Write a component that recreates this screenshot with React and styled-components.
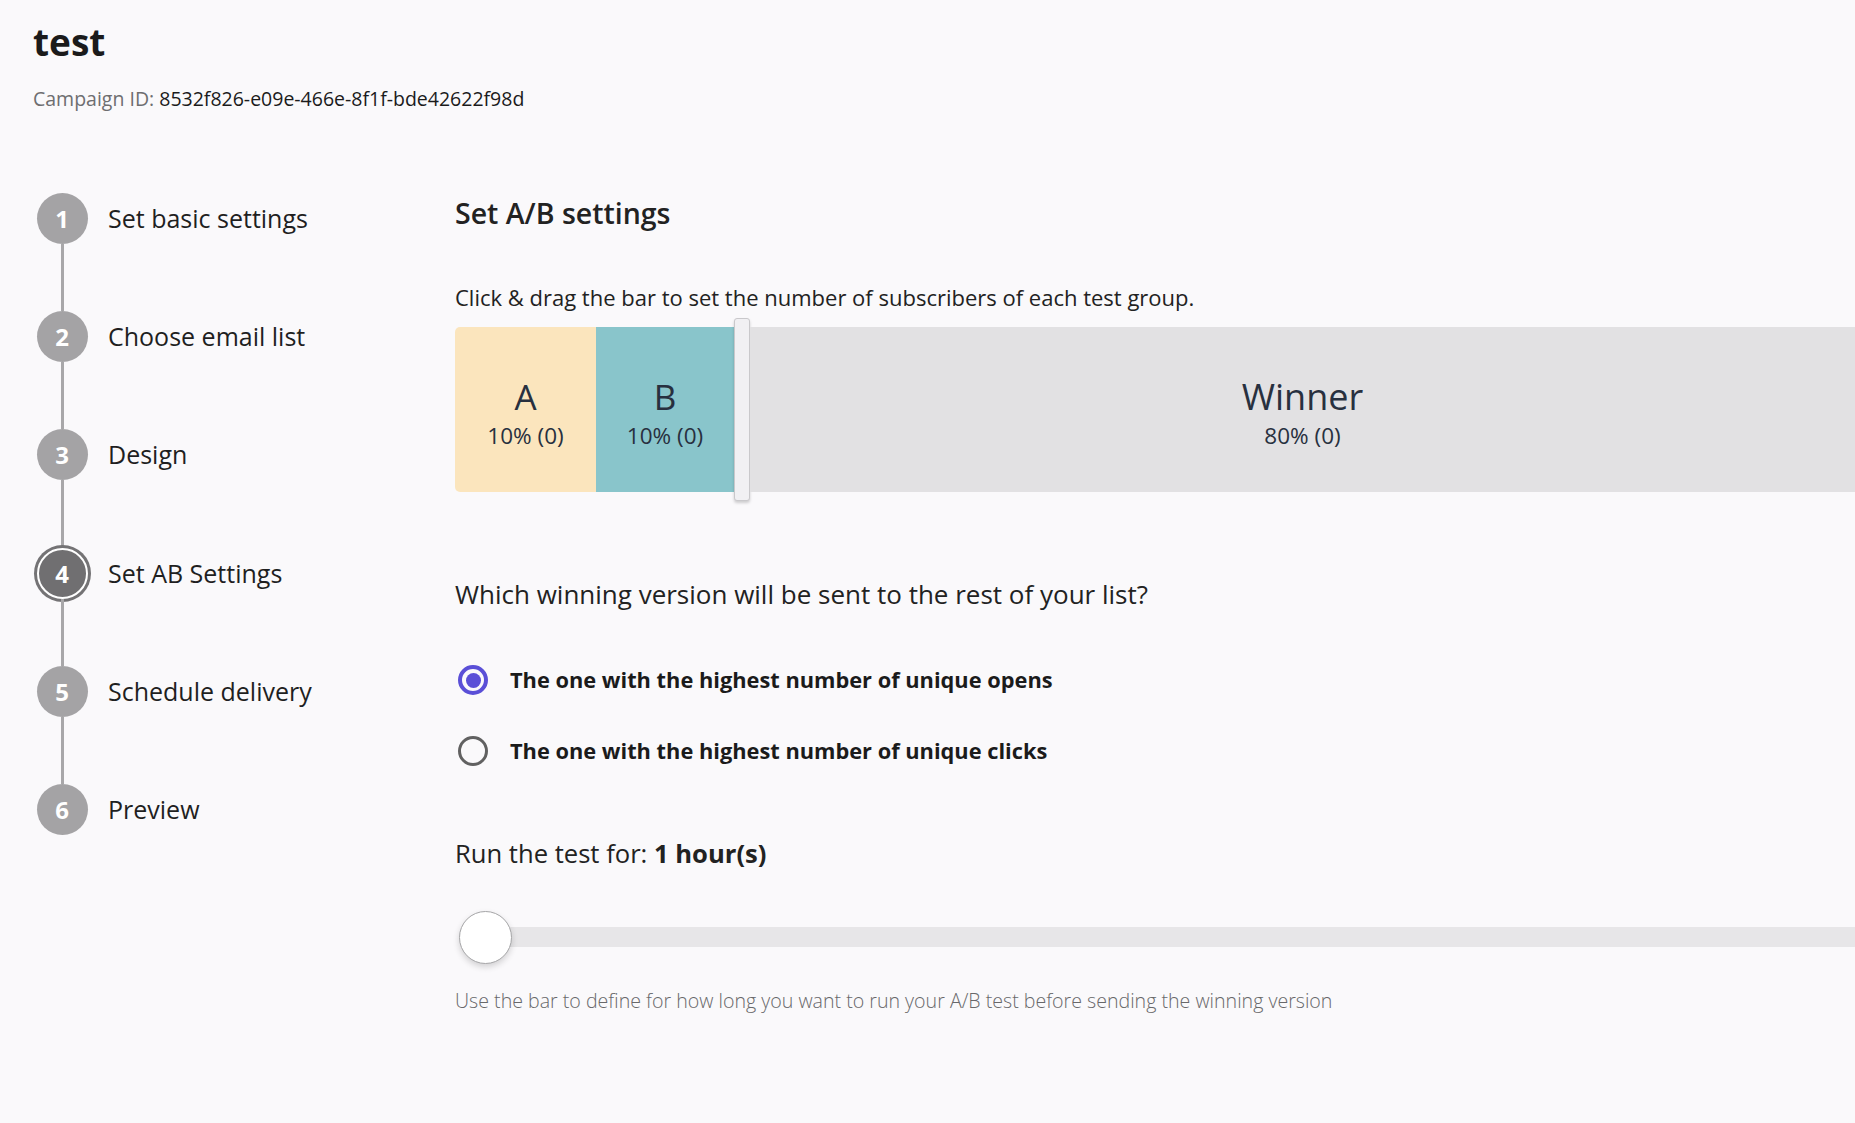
import styled, { createGlobalStyle } from "styled-components";

const GlobalStyle = createGlobalStyle`
  html, body {
    margin: 0;
    padding: 0;
    background: #faf9fb;
    font-family: "Open Sans", "Noto Sans", sans-serif;
    color: #1f1f1f;
  }
  body {
    overflow: hidden;
  }
`;

const Page = styled.div`
  width: 1855px;
  height: 1123px;
  box-sizing: border-box;
  padding: 17.5px 0 0 33px;
  overflow: hidden;
`;

const Header = styled.header`
  display: flex;
  flex-direction: column;
`;

const Title = styled.h1`
  margin: 0;
  font-size: 37px;
  line-height: 48px;
  font-weight: 700;
  color: #1b1b1b;
`;

const CampaignId = styled.div`
  margin-top: 21.5px;
  font-size: 19.5px;
  line-height: 23px;
  color: #1b1b1b;

  span {
    color: #6e6e70;
  }
`;

const Content = styled.div`
  display: flex;
  margin-top: 40px;
`;

const Sidebar = styled.nav`
  flex: 0 0 422px;
  box-sizing: border-box;
  padding: 42.5px 0 0 3.5px;
  display: flex;
  flex-direction: column;
`;

const StepRow = styled.div`
  display: flex;
  align-items: flex-start;
  gap: 20.5px;
`;

const Marker = styled.div`
  display: flex;
  flex-direction: column;
  align-items: center;
  width: 51px;
`;

const Circle = styled.div`
  width: 51px;
  height: 51px;
  box-sizing: border-box;
  border-radius: 50%;
  display: flex;
  align-items: center;
  justify-content: center;
  background: ${(p) => (p.$active ? "#706f71" : "#a4a3a5")};
  border: ${(p) => (p.$active ? "2px solid #ffffff" : "none")};
  box-shadow: ${(p) => (p.$active ? "0 0 0 3px #747375" : "none")};
  color: #ffffff;
  font-size: 24px;
  font-weight: 700;
`;

const Connector = styled.div`
  width: 3px;
  height: 67.4px;
  background: #a8a7a9;
`;

const StepLabel = styled.span`
  font-size: 25px;
  line-height: 51px;
  color: #1f1f1f;
`;

const Main = styled.main`
  flex: 1;
  min-width: 0;
  padding-top: 45px;
  display: flex;
  flex-direction: column;
`;

const SectionTitle = styled.h2`
  margin: 0;
  font-size: 28.5px;
  line-height: 36px;
  font-weight: 600;
  color: #222222;
`;

const Hint = styled.p`
  margin: 52.3px 0 0;
  font-size: 22px;
  line-height: 28px;
  color: #222222;
`;

const SplitBar = styled.div`
  margin-top: 16.2px;
  height: 165px;
  display: flex;
  align-items: stretch;
`;

const Segment = styled.div`
  flex: ${(p) => (p.$width ? `0 0 ${p.$width}px` : "1")};
  background: ${(p) => p.$color};
  border-radius: ${(p) => (p.$first ? "5px 0 0 5px" : "0")};
  display: flex;
  flex-direction: column;
  align-items: center;
  justify-content: center;
  padding-top: 7px;
  box-sizing: border-box;
  color: #28303f;
`;

const SegmentName = styled.div`
  font-size: ${(p) => (p.$big ? "36px" : "35px")};
  line-height: 40px;
  font-weight: 500;
`;

const SegmentValue = styled.div`
  margin-top: 5px;
  font-size: 22.5px;
  line-height: 28px;
`;

const Handle = styled.div`
  flex: 0 0 16px;
  align-self: center;
  height: 183px;
  box-sizing: border-box;
  border: 1px solid #c9c8cb;
  border-radius: 3px;
  background: #f1f0f3;
  box-shadow: 0 2px 3px rgba(0, 0, 0, 0.18);
  cursor: ew-resize;
`;

const Question = styled.h3`
  margin: 85.2px 0 0;
  font-size: 26px;
  line-height: 32px;
  font-weight: 500;
  color: #222222;
`;

const Options = styled.div`
  margin-top: 50.5px;
  display: flex;
  flex-direction: column;
  gap: 31px;
`;

const Option = styled.label`
  display: flex;
  align-items: center;
  height: 40px;
  gap: 22px;
  padding-left: 3px;
  cursor: pointer;
`;

const RadioMark = styled.span`
  flex: 0 0 30px;
  height: 30px;
  box-sizing: border-box;
  border-radius: 50%;
  border: ${(p) => (p.$checked ? "4px solid #5a4fd7" : "3px solid #616161")};
  display: flex;
  align-items: center;
  justify-content: center;

  &::after {
    content: "";
    display: ${(p) => (p.$checked ? "block" : "none")};
    width: 15px;
    height: 15px;
    border-radius: 50%;
    background: #5a4fd7;
  }
`;

const OptionText = styled.span`
  font-size: 21.8px;
  line-height: 40px;
  font-weight: 700;
  color: #1b1b1b;
`;

const Duration = styled.div`
  margin-top: 66.6px;
  font-size: 25.6px;
  line-height: 32px;
  color: #222222;

  strong {
    font-weight: 700;
  }
`;

const Slider = styled.div`
  position: relative;
  margin-top: 41px;
  height: 53px;
  display: flex;
  align-items: center;
`;

const Track = styled.div`
  flex: 1;
  height: 20px;
  margin-left: 26px;
  background: #e7e6e8;
`;

const Thumb = styled.div`
  position: absolute;
  left: 4px;
  top: 0;
  width: 53px;
  height: 53px;
  box-sizing: border-box;
  border-radius: 50%;
  border: 1px solid #a6a6a8;
  background: #ffffff;
  box-shadow: 0 3px 6px rgba(0, 0, 0, 0.16);
`;

const HelpText = styled.p`
  margin: 24.6px 0 0;
  font-size: 19.6px;
  line-height: 26px;
  font-weight: 300;
  color: #68686a;
`;

const steps = [
  { n: 1, label: "Set basic settings" },
  { n: 2, label: "Choose email list" },
  { n: 3, label: "Design" },
  { n: 4, label: "Set AB Settings", active: true },
  { n: 5, label: "Schedule delivery" },
  { n: 6, label: "Preview" },
];

const groups = [
  { name: "A", value: "10% (0)", color: "#fbe5bd", width: 141, first: true },
  { name: "B", value: "10% (0)", color: "#89c5cb", width: 138 },
];

const options = [
  { id: "opens", label: "The one with the highest number of unique opens", checked: true },
  { id: "clicks", label: "The one with the highest number of unique clicks" },
];

const App = () => {
  return (
    <>
      <GlobalStyle />
      <Page>
        <Header>
          <Title>test</Title>
          <CampaignId>
            <span>Campaign ID: </span>8532f826-e09e-466e-8f1f-bde42622f98d
          </CampaignId>
        </Header>
        <Content>
          <Sidebar>
            {steps.map((s, i) => (
              <StepRow key={s.n}>
                <Marker>
                  <Circle $active={s.active}>{s.n}</Circle>
                  {i < steps.length - 1 && <Connector />}
                </Marker>
                <StepLabel>{s.label}</StepLabel>
              </StepRow>
            ))}
          </Sidebar>
          <Main>
            <SectionTitle>Set A/B settings</SectionTitle>
            <Hint>Click &amp; drag the bar to set the number of subscribers of each test group.</Hint>
            <SplitBar>
              {groups.map((g) => (
                <Segment key={g.name} $color={g.color} $width={g.width} $first={g.first}>
                  <SegmentName>{g.name}</SegmentName>
                  <SegmentValue>{g.value}</SegmentValue>
                </Segment>
              ))}
              <Handle />
              <Segment $color="#e2e1e3">
                <SegmentName $big>Winner</SegmentName>
                <SegmentValue>80% (0)</SegmentValue>
              </Segment>
            </SplitBar>
            <Question>Which winning version will be sent to the rest of your list?</Question>
            <Options>
              {options.map((o) => (
                <Option key={o.id}>
                  <RadioMark $checked={o.checked} />
                  <OptionText>{o.label}</OptionText>
                </Option>
              ))}
            </Options>
            <Duration>
              Run the test for: <strong>1 hour(s)</strong>
            </Duration>
            <Slider>
              <Track />
              <Thumb />
            </Slider>
            <HelpText>
              Use the bar to define for how long you want to run your A/B test before sending the winning version
            </HelpText>
          </Main>
        </Content>
      </Page>
    </>
  );
};

export default App;
